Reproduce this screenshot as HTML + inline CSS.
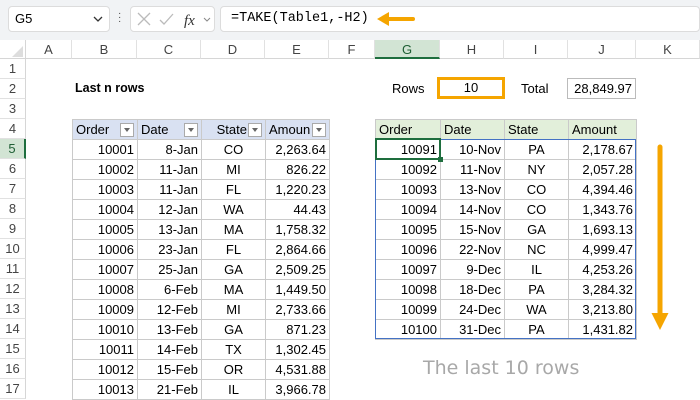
<!DOCTYPE html><html><head><style>
*{box-sizing:border-box;margin:0;padding:0}
body{width:700px;height:400px;overflow:hidden;background:#fff;font-family:"Liberation Sans",sans-serif;font-size:13px;color:#000;position:relative}
.a{position:absolute}
.bar{left:0;top:0;width:700px;height:40px;background:#f1f3f5}
.box{background:#fff;border:1px solid #dcdcdc;border-radius:4px}
.ch{top:40px;height:19px;border-right:1px solid #e1e1e1;border-bottom:1px solid #d6d6d6;text-align:center;line-height:19px;color:#444;background:#fff;font-size:13px}
.rh{left:0;width:26px;height:20px;border-bottom:1px solid #e1e1e1;border-right:1px solid #d6d6d6;text-align:center;line-height:20px;color:#444;background:#fff}
table{position:absolute;border-collapse:collapse;table-layout:fixed}
td{height:20px;border:1px solid #cacaca;padding:0 3px;white-space:nowrap;overflow:hidden;line-height:18px}
.r{text-align:right}.c{text-align:center}
.L th,.R th{height:20px;font-weight:normal;text-align:left;padding:0 3px;border:1px solid #cacaca;white-space:nowrap;overflow:hidden;line-height:18px}
.L th{background:#d9e1f2;position:relative}
.R th{background:#e2efda}
.dd{position:absolute;right:3px;top:3px;width:14px;height:14px;border:1px solid #aaa;background:#fff}
.dd:after{content:"";position:absolute;left:3px;top:4px;border-left:3px solid transparent;border-right:3px solid transparent;border-top:4px solid #666}
</style></head><body>
<div class="a bar"></div>
<div class="a box" style="left:8px;top:6px;width:102px;height:26px"></div>
<div class="a" style="left:15px;top:11px;font-size:13px">G5</div>
<svg class="a" style="left:93px;top:16px" width="10" height="7"><path d="M1 1l4 4 4-4" stroke="#333" fill="none" stroke-width="1.3"/></svg>
<div class="a" style="left:118px;top:12px;width:3px;height:14px;font-size:10px;color:#444;line-height:4px">·<br>·<br>·</div>
<div class="a box" style="left:130px;top:6px;width:85px;height:26px"></div>
<svg class="a" style="left:136px;top:11px" width="80" height="18"><path d="M2 2l12 12M14 2L2 14" stroke="#bbb" stroke-width="1.3"/><path d="M24 9l4 4 9-10" stroke="#bbb" fill="none" stroke-width="1.3"/><text x="48" y="14" font-family="Liberation Serif" font-style="italic" font-size="15" fill="#333">fx</text><path d="M68 7l3 3 3-3" stroke="#888" fill="none"/></svg>
<div class="a box" style="left:220px;top:6px;width:480px;height:26px"></div>
<div class="a" style="left:231px;top:11px;font-family:'Liberation Mono',monospace;font-size:13.5px">=TAKE(Table1,-H2)</div>
<svg class="a" style="left:375px;top:11px" width="40" height="16"><path d="M38 8H12" stroke="#f5a500" stroke-width="4" stroke-linecap="round"/><path d="M2 8l12-7v14z" fill="#f5a500"/></svg>
<div class="a" style="left:0;top:40px;width:26px;height:19px;background:#fff;border-right:1px solid #d6d6d6;border-bottom:1px solid #d6d6d6"></div>
<svg class="a" style="left:12px;top:46px" width="12" height="12"><path d="M11 0v11H0z" fill="#ddd"/></svg>
<div class="a ch" style="left:26px;width:46px">A</div>
<div class="a ch" style="left:72px;width:65px">B</div>
<div class="a ch" style="left:137px;width:64px">C</div>
<div class="a ch" style="left:201px;width:64px">D</div>
<div class="a ch" style="left:265px;width:64px">E</div>
<div class="a ch" style="left:329px;width:46px">F</div>
<div class="a ch" style="left:375px;width:65px;background:#d2e4d4;border-bottom:2px solid #1e6e3e;color:#1e5e34">G</div>
<div class="a ch" style="left:440px;width:64px">H</div>
<div class="a ch" style="left:504px;width:64px">I</div>
<div class="a ch" style="left:568px;width:68px">J</div>
<div class="a ch" style="left:636px;width:64px">K</div>
<div class="a rh" style="top:59px">1</div><div class="a rh" style="top:79px">2</div><div class="a rh" style="top:99px">3</div><div class="a rh" style="top:119px">4</div>
<div class="a rh" style="top:139px;background:#d2e4d4;border-right:2px solid #1e6e3e;color:#1e5e34">5</div>
<div class="a rh" style="top:159px">6</div><div class="a rh" style="top:179px">7</div><div class="a rh" style="top:199px">8</div><div class="a rh" style="top:219px">9</div><div class="a rh" style="top:239px">10</div><div class="a rh" style="top:259px">11</div><div class="a rh" style="top:279px">12</div><div class="a rh" style="top:299px">13</div><div class="a rh" style="top:319px">14</div><div class="a rh" style="top:339px">15</div><div class="a rh" style="top:359px">16</div><div class="a rh" style="top:379px">17</div>
<div class="a" style="left:75px;top:81px;font-weight:bold;font-size:12.5px">Last n rows</div>
<div class="a" style="left:392px;top:81px">Rows</div>
<div class="a" style="left:437px;top:77px;width:68px;height:22px;border:3px solid #f5a500;text-align:center;line-height:16px">10</div>
<div class="a" style="left:521px;top:81px">Total</div>
<div class="a" style="left:567px;top:78px;width:69px;height:21px;border:1px solid #bbb;text-align:right;padding-right:3px;line-height:19px">28,849.97</div>
<table class="L" style="left:72px;top:119px;width:257px">
<colgroup><col style="width:65px"><col style="width:64px"><col style="width:64px"><col style="width:64px"></colgroup>
<tr><th>Order<span class="dd"></span></th><th>Date<span class="dd"></span></th><th style="text-align:right;padding-right:18px">State<span class="dd"></span></th><th>Amoun<span class="dd"></span></th></tr>
<tr><td class="r">10001</td><td class="r">8-Jan</td><td class="c">CO</td><td class="r">2,263.64</td></tr>
<tr><td class="r">10002</td><td class="r">11-Jan</td><td class="c">MI</td><td class="r">826.22</td></tr>
<tr><td class="r">10003</td><td class="r">11-Jan</td><td class="c">FL</td><td class="r">1,220.23</td></tr>
<tr><td class="r">10004</td><td class="r">12-Jan</td><td class="c">WA</td><td class="r">44.43</td></tr>
<tr><td class="r">10005</td><td class="r">13-Jan</td><td class="c">MA</td><td class="r">1,758.32</td></tr>
<tr><td class="r">10006</td><td class="r">23-Jan</td><td class="c">FL</td><td class="r">2,864.66</td></tr>
<tr><td class="r">10007</td><td class="r">25-Jan</td><td class="c">GA</td><td class="r">2,509.25</td></tr>
<tr><td class="r">10008</td><td class="r">6-Feb</td><td class="c">MA</td><td class="r">1,449.50</td></tr>
<tr><td class="r">10009</td><td class="r">12-Feb</td><td class="c">MI</td><td class="r">2,733.66</td></tr>
<tr><td class="r">10010</td><td class="r">13-Feb</td><td class="c">GA</td><td class="r">871.23</td></tr>
<tr><td class="r">10011</td><td class="r">14-Feb</td><td class="c">TX</td><td class="r">1,302.45</td></tr>
<tr><td class="r">10012</td><td class="r">15-Feb</td><td class="c">OR</td><td class="r">4,531.88</td></tr>
<tr><td class="r">10013</td><td class="r">21-Feb</td><td class="c">IL</td><td class="r">3,966.78</td></tr>
</table>
<table class="R" style="left:375px;top:119px;width:261px">
<colgroup><col style="width:65px"><col style="width:64px"><col style="width:64px"><col style="width:68px"></colgroup>
<tr><th>Order</th><th>Date</th><th>State</th><th>Amount</th></tr>
<tr><td class="r">10091</td><td class="r">10-Nov</td><td class="c">PA</td><td class="r">2,178.67</td></tr>
<tr><td class="r">10092</td><td class="r">11-Nov</td><td class="c">NY</td><td class="r">2,057.28</td></tr>
<tr><td class="r">10093</td><td class="r">13-Nov</td><td class="c">CO</td><td class="r">4,394.46</td></tr>
<tr><td class="r">10094</td><td class="r">14-Nov</td><td class="c">CO</td><td class="r">1,343.76</td></tr>
<tr><td class="r">10095</td><td class="r">15-Nov</td><td class="c">GA</td><td class="r">1,693.13</td></tr>
<tr><td class="r">10096</td><td class="r">22-Nov</td><td class="c">NC</td><td class="r">4,999.47</td></tr>
<tr><td class="r">10097</td><td class="r">9-Dec</td><td class="c">IL</td><td class="r">4,253.26</td></tr>
<tr><td class="r">10098</td><td class="r">18-Dec</td><td class="c">PA</td><td class="r">3,284.32</td></tr>
<tr><td class="r">10099</td><td class="r">24-Dec</td><td class="c">WA</td><td class="r">3,213.80</td></tr>
<tr><td class="r">10100</td><td class="r">31-Dec</td><td class="c">PA</td><td class="r">1,431.82</td></tr>
</table>
<div class="a" style="left:375px;top:139px;width:261px;height:200px;border:1.5px solid #4472c4"></div>
<div class="a" style="left:375px;top:138px;width:66px;height:22px;border:2px solid #1e6e3e"></div>
<div class="a" style="left:438px;top:157px;width:5px;height:5px;background:#1e6e3e"></div>
<svg class="a" style="left:650px;top:143px" width="20" height="192"><path d="M10 4V172" stroke="#f5a500" stroke-width="5" stroke-linecap="round"/><path d="M1.5 170h17l-8.5 17z" fill="#f5a500"/></svg>
<div class="a" style="left:423px;top:357px;font-family:'Comic Sans MS','DejaVu Sans',sans-serif;font-size:19px;color:#a8a8a8">The last 10 rows</div>
</body></html>
